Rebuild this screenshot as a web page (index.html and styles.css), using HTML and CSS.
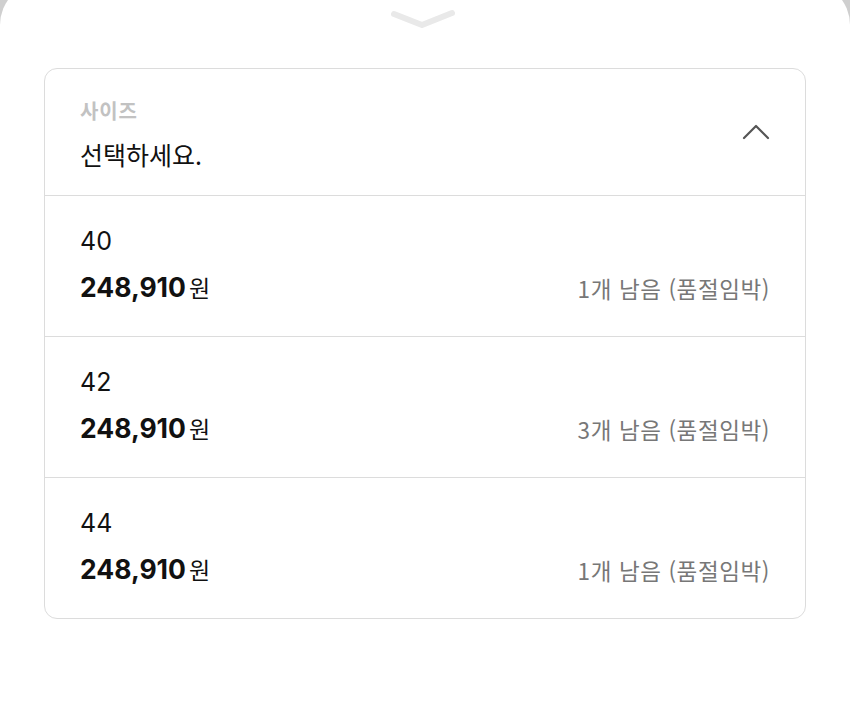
FILE: index.html
```html
<!DOCTYPE html>
<html lang="ko">
<head>
<meta charset="utf-8">
<title>사이즈 선택</title>
<link rel="stylesheet" href="styles.css">
</head>
<body>
<div class="sheet">
  <div class="handle">
    <svg class="handle-icon" width="70" height="24" viewBox="0 0 70 24">
      <polyline points="4,6 32,17 62,5" fill="none" stroke="#e9e9e9" stroke-width="6" stroke-linecap="round" stroke-linejoin="round"/>
    </svg>
  </div>
  <div class="card">
    <div class="card-head">
      <div class="head-text">
        <div class="head-label">사이즈</div>
        <div class="head-value">선택하세요.</div>
      </div>
      <svg class="chev-up" width="28" height="16" viewBox="0 0 28 16">
        <polyline points="2,14 14,2 26,14" fill="none" stroke="#555" stroke-width="2.2" stroke-linecap="round" stroke-linejoin="round"/>
      </svg>
    </div>
    <div class="option">
      <div class="opt-size">40</div>
      <div class="opt-line">
        <div class="price"><span class="num">248,910</span><span class="won">원</span></div>
        <div class="stock">1개 남음 (품절임박)</div>
      </div>
    </div>
    <div class="option">
      <div class="opt-size">42</div>
      <div class="opt-line">
        <div class="price"><span class="num">248,910</span><span class="won">원</span></div>
        <div class="stock">3개 남음 (품절임박)</div>
      </div>
    </div>
    <div class="option">
      <div class="opt-size">44</div>
      <div class="opt-line">
        <div class="price"><span class="num">248,910</span><span class="won">원</span></div>
        <div class="stock">1개 남음 (품절임박)</div>
      </div>
    </div>
  </div>
</div>
</body>
</html>
```

FILE: styles.css
```css
html, body {
  margin: 0;
  padding: 0;
}
body {
  background: #cfcfcf;
  font-family: Inter, "Noto Sans CJK KR", sans-serif;
  color: #111;
  overflow: hidden;
}
.sheet {
  margin-top: -18px;
  padding-top: 18px;
  background: #fff;
  border-radius: 43px 43px 0 0;
  min-height: 740px;
}
.handle {
  height: 68px;
  display: flex;
  justify-content: center;
  align-items: flex-start;
}
.handle-icon {
  margin-top: 8px;
}
.card {
  margin: 0 44px;
  border: 1.5px solid #dcdcdc;
  border-radius: 13px;
}
.card-head {
  display: flex;
  align-items: center;
  justify-content: space-between;
  padding: 29px 35px 25px 35px;
  border-bottom: 1.5px solid #dcdcdc;
}
.head-label {
  font-family: "Noto Sans CJK KR", sans-serif;
  font-size: 20px;
  font-weight: 700;
  letter-spacing: 0.8px;
  line-height: 26px;
  color: #c2c2c2;
}
.head-value {
  margin-top: 14px;
  font-family: "Noto Sans CJK KR", sans-serif;
  font-size: 25px;
  line-height: 32px;
  color: #111;
}
.chev-up {
  margin-top: -4px;
}
.option {
  padding: 30px 35px 33px 35px;
  border-bottom: 1.5px solid #dcdcdc;
}
.option:last-child {
  border-bottom: none;
}
.opt-size {
  font-size: 25px;
  line-height: 30px;
  color: #111;
}
.opt-line {
  margin-top: 15px;
  display: flex;
  align-items: center;
  justify-content: space-between;
  height: 32px;
}
.price {
  display: flex;
  align-items: baseline;
}
.num {
  font-size: 26.5px;
  font-weight: 700;
}
.won {
  font-family: "Noto Sans CJK KR", sans-serif;
  font-size: 23px;
  margin-left: 3px;
}
.stock {
  font-family: "Noto Sans CJK KR", sans-serif;
  font-size: 22.5px;
  letter-spacing: 0.6px;
  color: #777;
  margin-top: 2px;
}
```
